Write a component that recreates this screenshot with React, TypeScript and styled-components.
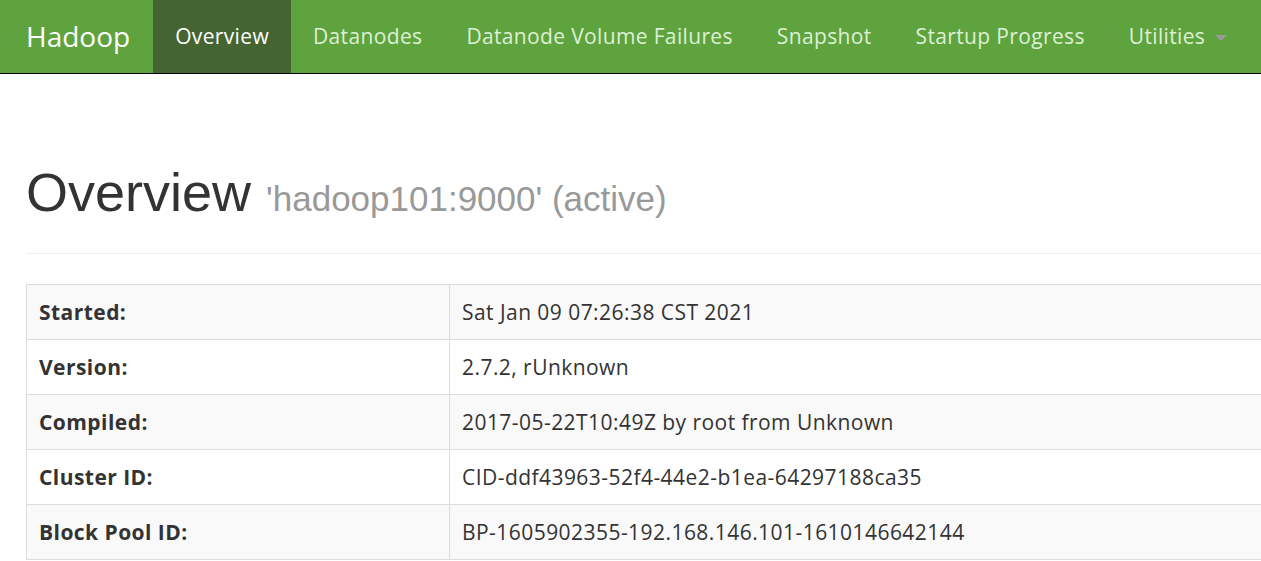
import React from "react";
import styled, { createGlobalStyle } from "styled-components";

const Global = createGlobalStyle`
  html, body { margin: 0; padding: 0; background: #fff; }
  body { font-family: "Open Sans", "Noto Sans", sans-serif; color: #333; }
`;

const NavBar = styled.nav`
  display: flex;
  align-items: stretch;
  height: 73px;
  background: #5fa33e;
  border-bottom: 1px solid #000;
  padding-left: 5px;
`;

const Brand = styled.a`
  display: flex;
  align-items: center;
  padding: 0 23px 2px 21px;
  font-size: 28px;
  color: #fff;
  text-decoration: none;
`;

const NavItem = styled.a<{ $active?: boolean }>`
  display: flex;
  align-items: center;
  gap: 10px;
  padding: 0 22px 2px 22px;
  font-size: 21px;
  letter-spacing: 0.35px;
  color: ${(p) => (p.$active ? "#fff" : "#ddf0d5")};
  background: ${(p) => (p.$active ? "#446431" : "transparent")};
  text-decoration: none;
`;

const Caret = styled.span`
  width: 0;
  height: 0;
  border-left: 6px solid transparent;
  border-right: 6px solid transparent;
  border-top: 6px solid #9a9a9a;
  margin-top: 4px;
`;

const Container = styled.main`
  padding: 0 0 0 26px;
`;

const Header = styled.div`
  margin-top: 89px;
  padding-bottom: 31px;
  border-bottom: 1px solid #eee;
`;

const Title = styled.h1`
  margin: 0;
  font-family: "Liberation Sans", Arial, sans-serif;
  font-weight: 400;
  font-size: 54px;
  line-height: 1.1;
  color: #333;
`;

const Sub = styled.small`
  font-size: 35px;
  color: #999;
`;

const Table = styled.table`
  margin-top: 30px;
  width: 100%;
  border-collapse: collapse;
  font-size: 21px;
  letter-spacing: 0.45px;
`;

const Row = styled.tr<{ $odd: boolean }>`
  background: ${(p) => (p.$odd ? "#f9f9f9" : "#fff")};
`;

const Th = styled.th`
  width: 398px;
  text-align: left;
  font-weight: 700;
  padding: 0 12px;
  height: 54px;
  border: 1px solid #ddd;
`;

const Td = styled.td`
  padding: 0 12px;
  height: 54px;
  border: 1px solid #ddd;
  border-right: none;
`;

const navItems = [
  "Datanodes",
  "Datanode Volume Failures",
  "Snapshot",
  "Startup Progress",
];

const rows: [string, string][] = [
  ["Started:", "Sat Jan 09 07:26:38 CST 2021"],
  ["Version:", "2.7.2, rUnknown"],
  ["Compiled:", "2017-05-22T10:49Z by root from Unknown"],
  ["Cluster ID:", "CID-ddf43963-52f4-44e2-b1ea-64297188ca35"],
  ["Block Pool ID:", "BP-1605902355-192.168.146.101-1610146642144"],
];

export default function App() {
  return (
    <>
      <Global />
      <NavBar>
        <Brand href="#">Hadoop</Brand>
        <NavItem href="#" $active>Overview</NavItem>
        {navItems.map((n) => (
          <NavItem href="#" key={n}>{n}</NavItem>
        ))}
        <NavItem href="#">
          Utilities <Caret />
        </NavItem>
      </NavBar>
      <Container>
        <Header>
          <Title>
            Overview <Sub>'hadoop101:9000' (active)</Sub>
          </Title>
        </Header>
        <Table>
          <tbody>
            {rows.map(([k, v], i) => (
              <Row key={k} $odd={i % 2 === 0}>
                <Th>{k}</Th>
                <Td>{v}</Td>
              </Row>
            ))}
          </tbody>
        </Table>
      </Container>
    </>
  );
}
